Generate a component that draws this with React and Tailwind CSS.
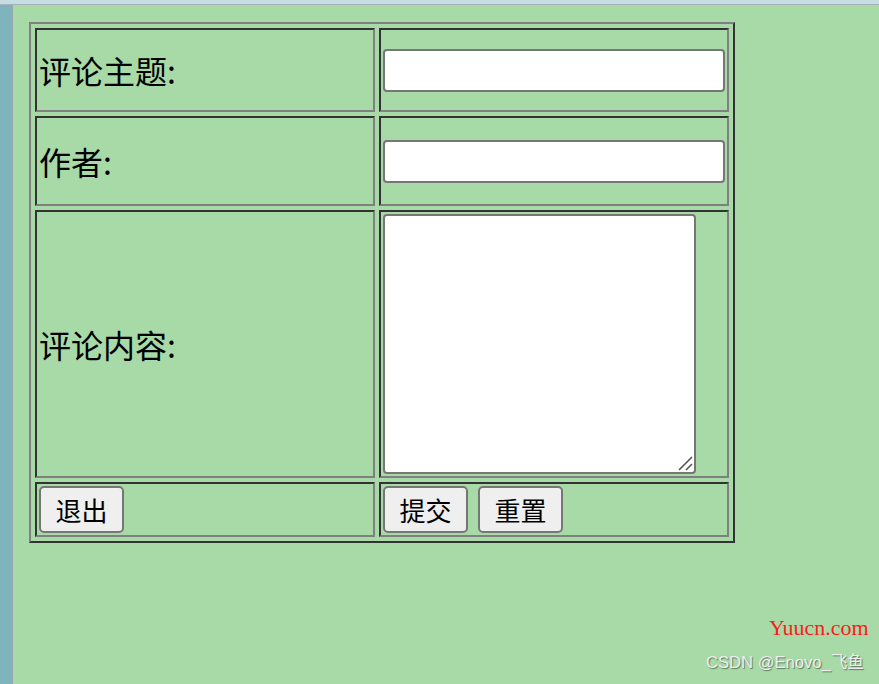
export default function App() {
  const cjk = { fontFamily: '"Noto Sans CJK SC", "Microsoft YaHei", sans-serif' };
  const outTd = 'border-2 border-t-[#333333] border-l-[#333333] border-b-[#808080] border-r-[#808080] p-[2px] align-middle';
  const btn = 'w-[85px] h-[47px] bg-[#efefef] border-2 border-[#767676] rounded-[5px] text-[26px] leading-none text-black';

  return (
    <div className="relative w-[879px] h-[684px] overflow-hidden bg-[#c6dee3]" style={cjk}>
      <div className="absolute left-0 top-[4px] right-0 bottom-0 flex border-t border-[#a3b3b8]">
        <div className="w-[13px] bg-[#7fb4be] border-r border-[#9aa8ad]" />
        <div className="flex-1 bg-[#a8daa8] pl-[16px] pt-[17px]">
          <table className="border-separate border-spacing-[4px] border-2 border-t-[#808080] border-l-[#808080] border-b-[#333333] border-r-[#333333] w-[706px]">
            <tbody>
              <tr className="h-[84px]">
                <td className={`${outTd} w-[340px] text-[32px] leading-none text-black`}>评论主题:</td>
                <td className={outTd}>
                  <input type="text" className="block w-full h-[43px] bg-white border-2 border-[#767676] rounded-[4px]" />
                </td>
              </tr>
              <tr className="h-[90px]">
                <td className={`${outTd} text-[32px] leading-none text-black`}>作者:</td>
                <td className={outTd}>
                  <input type="text" className="block w-full h-[43px] bg-white border-2 border-[#767676] rounded-[4px]" />
                </td>
              </tr>
              <tr className="h-[268px]">
                <td className={`${outTd} text-[32px] leading-none text-black`}>评论内容:</td>
                <td className={outTd}>
                  <div className="relative w-[313px] h-[260px]">
                    <textarea className="block w-full h-full bg-white border-2 border-[#767676] rounded-[4px] resize-none" />
                    {/* resize grip */}
                    <svg className="absolute right-[3px] bottom-[3px] pointer-events-none" width="16" height="16" viewBox="0 0 16 16">
                      <path d="M2 15 L15 2 M9 15 L15 9" stroke="#555555" strokeWidth="1.6" fill="none" />
                    </svg>
                  </div>
                </td>
              </tr>
              <tr className="h-[55px]">
                <td className={outTd}>
                  <button className={btn}>退出</button>
                </td>
                <td className={outTd}>
                  <div className="flex gap-[10px]">
                    <button className={btn}>提交</button>
                    <button className={btn}>重置</button>
                  </div>
                </td>
              </tr>
            </tbody>
          </table>
        </div>
      </div>

      <div
        className="absolute left-[769px] top-[617px] text-[22px] leading-none text-[#ff1a1a]"
        style={{ fontFamily: '"Liberation Serif", serif' }}
      >
        Yuucn.com
      </div>
      <div
        className="absolute left-[706px] top-[655px] text-[16.6px] leading-none text-[#eeeeee] [text-shadow:1px_1px_1px_rgba(0,0,0,0.45)]"
        style={{ fontFamily: '"Liberation Sans", "Noto Sans CJK SC", sans-serif' }}
      >
        CSDN @Enovo_飞鱼
      </div>
    </div>
  );
}
